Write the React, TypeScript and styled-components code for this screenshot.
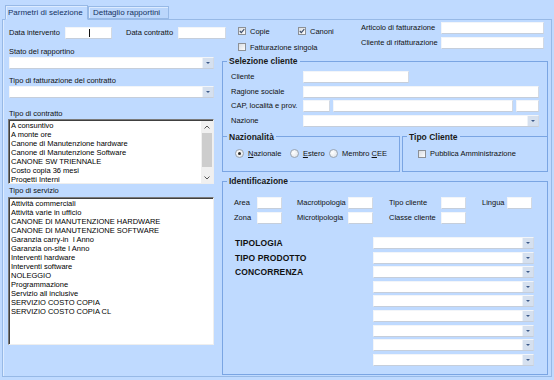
import { Fragment } from 'react';
import styled, { createGlobalStyle } from 'styled-components';

const CONTRACT_TYPES = [
  'A consuntivo',
  'A monte ore',
  'Canone di Manutenzione hardware',
  'Canone di Manutenzione Software',
  'CANONE SW TRIENNALE',
  'Costo copia 36 mesi',
  'Progetti Interni',
];

const SERVICE_TYPES = [
  'Attività commerciali',
  'Attività varie in ufficio',
  'CANONE DI MANUTENZIONE HARDWARE',
  'CANONE DI MANUTENZIONE SOFTWARE',
  'Garanzia carry-in  I Anno',
  'Garanzia on-site I Anno',
  'Interventi hardware',
  'Interventi software',
  'NOLEGGIO',
  'Programmazione',
  'Servizio all inclusive',
  'SERVIZIO COSTO COPIA',
  'SERVIZIO COSTO COPIA CL',
];

const ID_COMBOS = ['TIPOLOGIA', 'TIPO PRODOTTO', 'CONCORRENZA', '', '', '', '', '', ''];

const GlobalStyle = createGlobalStyle`
  html, body {
    margin: 0;
    padding: 0;
  }
  body {
    background: #bfdaff;
    font-family: "Liberation Sans", Arial, sans-serif;
    font-size: 7.5px;
    color: #111;
  }
`;

const Window = styled.div`
  width: 554px;
  height: 380px;
  box-sizing: border-box;
  padding: 5px 2px 3px;
  display: flex;
  flex-direction: column;
  background: #bfdaff;
  overflow: hidden;
`;

const TabStrip = styled.div`
  display: flex;
  align-items: flex-end;
  height: 14px;
  padding-left: 3px;
  position: relative;
  z-index: 1;
`;

const Tab = styled.div<{ $active?: boolean; $w: number }>`
  box-sizing: border-box;
  width: ${(p) => p.$w}px;
  height: ${(p) => (p.$active ? 15 : 13)}px;
  margin-bottom: ${(p) => (p.$active ? -1 : 0)}px;
  padding-left: ${(p) => (p.$active ? 2 : 4)}px;
  display: flex;
  align-items: center;
  font-size: 8px;
  color: #15325f;
  white-space: nowrap;
  border: 1px solid #97b9e6;
  border-bottom: ${(p) => (p.$active ? '1px solid #bfdaff' : '1px solid #97b9e6')};
  background: ${(p) => (p.$active ? '#bfdaff' : '#bbd6fb')};
  box-shadow: inset 1px 1px 0 #dcebff;
`;

const Panel = styled.div`
  flex: 1;
  box-sizing: border-box;
  padding: 2px 5px 0;
  border: 1px solid #97b9e6;
  box-shadow: inset 1px 0 0 #dcebff;
  display: flex;
  flex-direction: column;
`;

const TopRow = styled.div`
  display: grid;
  grid-template-columns: 230px 123px 1fr;
  height: 25px;
  align-items: start;
`;

const DateGroup = styled.div`
  display: flex;
  align-items: center;
  margin-top: 5px;
  padding-left: 1px;
`;

const Label = styled.span<{ $w?: number; $gap?: number }>`
  display: inline-block;
  width: ${(p) => (p.$w ? `${p.$w}px` : 'auto')};
  margin-left: ${(p) => p.$gap ?? 0}px;
  line-height: 10px;
  white-space: nowrap;
  flex-shrink: 0;
`;

const TextBox = styled.div<{ $w?: number }>`
  box-sizing: border-box;
  width: ${(p) => (p.$w ? `${p.$w}px` : '100%')};
  height: 12px;
  flex-shrink: 0;
  background: #fff;
  border: 1px solid;
  border-color: #f2f5f9 #d2d9e3 #c5cedb #f2f5f9;
  display: flex;
  align-items: center;
`;

const Caret = styled.span`
  width: 1px;
  height: 8px;
  margin-left: 23px;
  background: #111;
`;

const Combo = styled(TextBox)`
  justify-content: flex-end;
`;

const DropButton = styled.span`
  width: 10px;
  height: 100%;
  background: #d5e0ef;
  border-left: 1px solid #edf2f8;
  display: flex;
  align-items: center;
  justify-content: center;
  &::after {
    content: '';
    border-left: 2px solid transparent;
    border-right: 2px solid transparent;
    border-top: 2px solid #3d5a8a;
  }
`;

const CheckGroup = styled.div`
  display: grid;
  grid-template-columns: 60px auto;
  row-gap: 7px;
  margin-top: 4.5px;
`;

const CheckItem = styled.label<{ $span?: boolean }>`
  display: flex;
  align-items: center;
  gap: 4px;
  height: 9px;
  white-space: nowrap;
  grid-column: ${(p) => (p.$span ? '1 / span 2' : 'auto')};
`;

const CheckBox = styled.span`
  box-sizing: border-box;
  width: 8px;
  height: 8px;
  border: 1px solid #8c9096;
  background: linear-gradient(135deg, #d9dde2, #fbfbfc);
  display: flex;
  align-items: center;
  justify-content: center;
`;

const Radio = styled.span<{ $checked?: boolean }>`
  box-sizing: border-box;
  width: 9px;
  height: 9px;
  border-radius: 50%;
  border: 1px solid #9aa4b0;
  background: radial-gradient(circle at 35% 35%, #ffffff, #dadfe6);
  display: flex;
  align-items: center;
  justify-content: center;
  &::after {
    content: '';
    width: 3px;
    height: 3px;
    border-radius: 50%;
    background: ${(p) => (p.$checked ? '#2b2b2b' : 'transparent')};
  }
`;

const ArticoloGroup = styled.div`
  display: grid;
  grid-template-columns: 80px 103px;
  grid-auto-rows: 12px;
  row-gap: 3px;
  align-items: center;
`;

const Body = styled.div`
  display: grid;
  grid-template-columns: 206px 326px;
  column-gap: 8px;
`;

const LeftColumn = styled.div`
  display: flex;
  flex-direction: column;
`;

const FieldCaption = styled.div<{ $top?: number }>`
  margin-top: ${(p) => p.$top ?? 0}px;
  padding-left: 1px;
  line-height: 10px;
  white-space: nowrap;
`;

const LeftCombo = styled(Combo)`
  margin-left: 1px;
  width: 205px;
`;

const ListBox = styled.div<{ $h: number; $top?: number }>`
  box-sizing: border-box;
  height: ${(p) => p.$h}px;
  margin-top: ${(p) => p.$top ?? 0}px;
  background: #fff;
  border: 1px solid;
  border-color: #7a7a7a #eeeeee #eeeeee #7a7a7a;
  box-shadow: inset 1px 1px 0 #404040;
  display: flex;
  overflow: hidden;
`;

const Items = styled.div`
  flex: 1;
  padding: 0.5px 0 0 2px;
`;

const Item = styled.div`
  line-height: 9px;
  white-space: pre;
  color: #000;
`;

const ScrollBar = styled.div`
  width: 12px;
  margin-top: 1px;
  display: flex;
  flex-direction: column;
  background: #f0f0f0;
`;

const ScrollArrow = styled.div`
  height: 11px;
  display: flex;
  align-items: center;
  justify-content: center;
`;

const Track = styled.div`
  flex: 1;
  padding: 1px 1px;
`;

const Thumb = styled.div`
  height: 34px;
  background: #cdcdcd;
`;

const RightColumn = styled.div`
  display: flex;
  flex-direction: column;
  margin-top: 9px;
`;

const GroupBox = styled.fieldset<{ $noBottom?: boolean }>`
  margin: 0;
  padding: 0;
  min-width: 0;
  box-sizing: border-box;
  border: 1px solid #7aa5e3;
  border-bottom: ${(p) => (p.$noBottom ? 'none' : '1px solid #7aa5e3')};
`;

const Legend = styled.legend`
  margin-left: 4px;
  padding: 0 2px;
  font-size: 8.5px;
  font-weight: bold;
  line-height: 10px;
  color: #1a1a1a;
`;

const GroupBody = styled.div<{ $pad: string }>`
  padding: ${(p) => p.$pad};
  display: flex;
  flex-direction: column;
`;

const FormRows = styled.div`
  display: grid;
  grid-template-columns: 72px 1fr;
  grid-auto-rows: 12px;
  row-gap: 2.67px;
  align-items: center;
`;

const InputGroup = styled.div`
  display: flex;
  gap: 3px;
`;

const SubGroups = styled.div`
  display: flex;
  gap: 2px;
  margin: 5px -9px 0;
`;

const SubGroup = styled(GroupBox)<{ $w: number }>`
  width: ${(p) => p.$w}px;
`;

const OptionRow = styled.div`
  display: flex;
  align-items: center;
  height: 10px;
`;

const Option = styled.label<{ $w?: number }>`
  display: flex;
  align-items: center;
  gap: 4px;
  width: ${(p) => (p.$w ? `${p.$w}px` : 'auto')};
  white-space: nowrap;
`;

const IdGroup = styled(GroupBox)`
  margin-top: 4.5px;
`;

const CodeGrid = styled.div`
  display: grid;
  grid-template-columns: 63px 92px 93px 50px;
  grid-auto-rows: 12px;
  row-gap: 3px;
`;

const CodeField = styled.div`
  display: flex;
  align-items: center;
`;

const ComboGrid = styled.div`
  display: grid;
  grid-template-columns: 139px 161px;
  grid-auto-rows: 12px;
  row-gap: 2.625px;
  align-items: center;
  margin-top: 13px;
`;

const ComboLabel = styled.span`
  padding-left: 1px;
  font-size: 8.5px;
  font-weight: bold;
  letter-spacing: 0.1px;
  color: #111;
  white-space: nowrap;
`;

const Check = () => (
  <svg width="6" height="6" viewBox="0 0 6 6">
    <polyline points="0.8,3 2.3,4.6 5.3,1.2" fill="none" stroke="#3a4c68" strokeWidth="1.1" />
  </svg>
);

const Chevron = ({ up }: { up?: boolean }) => (
  <svg width="6" height="4" viewBox="0 0 6 4">
    <polyline
      points={up ? '0.5,3.5 3,1 5.5,3.5' : '0.5,0.5 3,3 5.5,0.5'}
      fill="none"
      stroke="#555"
      strokeWidth="1"
    />
  </svg>
);

const ComboBox = ({ w }: { w?: number }) => (
  <Combo $w={w}>
    <DropButton />
  </Combo>
);

export default function App() {
  return (
    <Window>
      <GlobalStyle />
      <TabStrip>
        <Tab $active $w={83}>Parmetri di selezione</Tab>
        <Tab $w={81}>Dettaglio rapportini</Tab>
      </TabStrip>

      <Panel>
        <TopRow>
          <DateGroup>
            <Label $w={56}>Data intervento</Label>
            <TextBox $w={47}>
              <Caret />
            </TextBox>
            <Label $w={52} $gap={14}>Data contratto</Label>
            <TextBox $w={48} />
          </DateGroup>

          <CheckGroup>
            <CheckItem>
              <CheckBox><Check /></CheckBox>
              Copie
            </CheckItem>
            <CheckItem>
              <CheckBox><Check /></CheckBox>
              Canoni
            </CheckItem>
            <CheckItem $span>
              <CheckBox />
              Fatturazione singola
            </CheckItem>
          </CheckGroup>

          <ArticoloGroup>
            <Label>Articolo di fatturazione</Label>
            <TextBox />
            <Label>Cliente di rifatturazione</Label>
            <TextBox />
          </ArticoloGroup>
        </TopRow>

        <Body>
          <LeftColumn>
            <FieldCaption>Stato del rapportino</FieldCaption>
            <LeftCombo>
              <DropButton />
            </LeftCombo>
            <FieldCaption $top={7}>Tipo di fatturazione del contratto</FieldCaption>
            <LeftCombo>
              <DropButton />
            </LeftCombo>

            <FieldCaption $top={11}>Tipo di contratto</FieldCaption>
            <ListBox $h={65}>
              <Items>
                {CONTRACT_TYPES.map((t) => (
                  <Item key={t}>{t}</Item>
                ))}
              </Items>
              <ScrollBar>
                <ScrollArrow><Chevron up /></ScrollArrow>
                <Track><Thumb /></Track>
                <ScrollArrow><Chevron /></ScrollArrow>
              </ScrollBar>
            </ListBox>

            <FieldCaption $top={2}>Tipo di servizio</FieldCaption>
            <ListBox $h={148} $top={1}>
              <Items>
                {SERVICE_TYPES.map((t) => (
                  <Item key={t}>{t}</Item>
                ))}
              </Items>
            </ListBox>
          </LeftColumn>

          <RightColumn>
            <GroupBox $noBottom>
              <Legend>Selezione cliente</Legend>
              <GroupBody $pad="5px 8px 0">
                <FormRows>
                  <Label>Cliente</Label>
                  <TextBox $w={106} />
                  <Label>Ragione sociale</Label>
                  <TextBox />
                  <Label>CAP, località e prov.</Label>
                  <InputGroup>
                    <TextBox $w={27} />
                    <TextBox $w={180} />
                    <TextBox $w={23} />
                  </InputGroup>
                  <Label>Nazione</Label>
                  <ComboBox />
                </FormRows>

                <SubGroups>
                  <SubGroup $w={178}>
                    <Legend>Nazionalità</Legend>
                    <GroupBody $pad="7px 12px 12px">
                      <OptionRow>
                        <Option $w={59}>
                          <Radio $checked />
                          <span><u>N</u>azionale</span>
                        </Option>
                        <Option $w={42}>
                          <Radio />
                          <span><u>E</u>stero</span>
                        </Option>
                        <Option>
                          <Radio />
                          <span>Membro <u>C</u>EE</span>
                        </Option>
                      </OptionRow>
                    </GroupBody>
                  </SubGroup>
                  <SubGroup $w={146}>
                    <Legend>Tipo Cliente</Legend>
                    <GroupBody $pad="7px 15px 12px">
                      <OptionRow>
                        <Option>
                          <CheckBox />
                          <span>Pubblica Amministrazione</span>
                        </Option>
                      </OptionRow>
                    </GroupBody>
                  </SubGroup>
                </SubGroups>
              </GroupBody>
            </GroupBox>

            <IdGroup>
              <Legend>Identificazione</Legend>
              <GroupBody $pad="10.5px 11px 8px">
                <CodeGrid>
                  <CodeField><Label $w={23}>Area</Label><TextBox $w={25} /></CodeField>
                  <CodeField><Label $w={51}>Macrotipologia</Label><TextBox $w={25} /></CodeField>
                  <CodeField><Label $w={52}>Tipo cliente</Label><TextBox $w={25} /></CodeField>
                  <CodeField><Label $w={25}>Lingua</Label><TextBox $w={25} /></CodeField>
                  <CodeField><Label $w={23}>Zona</Label><TextBox $w={25} /></CodeField>
                  <CodeField><Label $w={51}>Microtipologia</Label><TextBox $w={25} /></CodeField>
                  <CodeField><Label $w={52}>Classe cliente</Label><TextBox $w={25} /></CodeField>
                </CodeGrid>

                <ComboGrid>
                  {ID_COMBOS.map((label, i) => (
                    <Fragment key={i}>
                      <ComboLabel>{label}</ComboLabel>
                      <ComboBox />
                    </Fragment>
                  ))}
                </ComboGrid>
              </GroupBody>
            </IdGroup>
          </RightColumn>
        </Body>
      </Panel>
    </Window>
  );
}
